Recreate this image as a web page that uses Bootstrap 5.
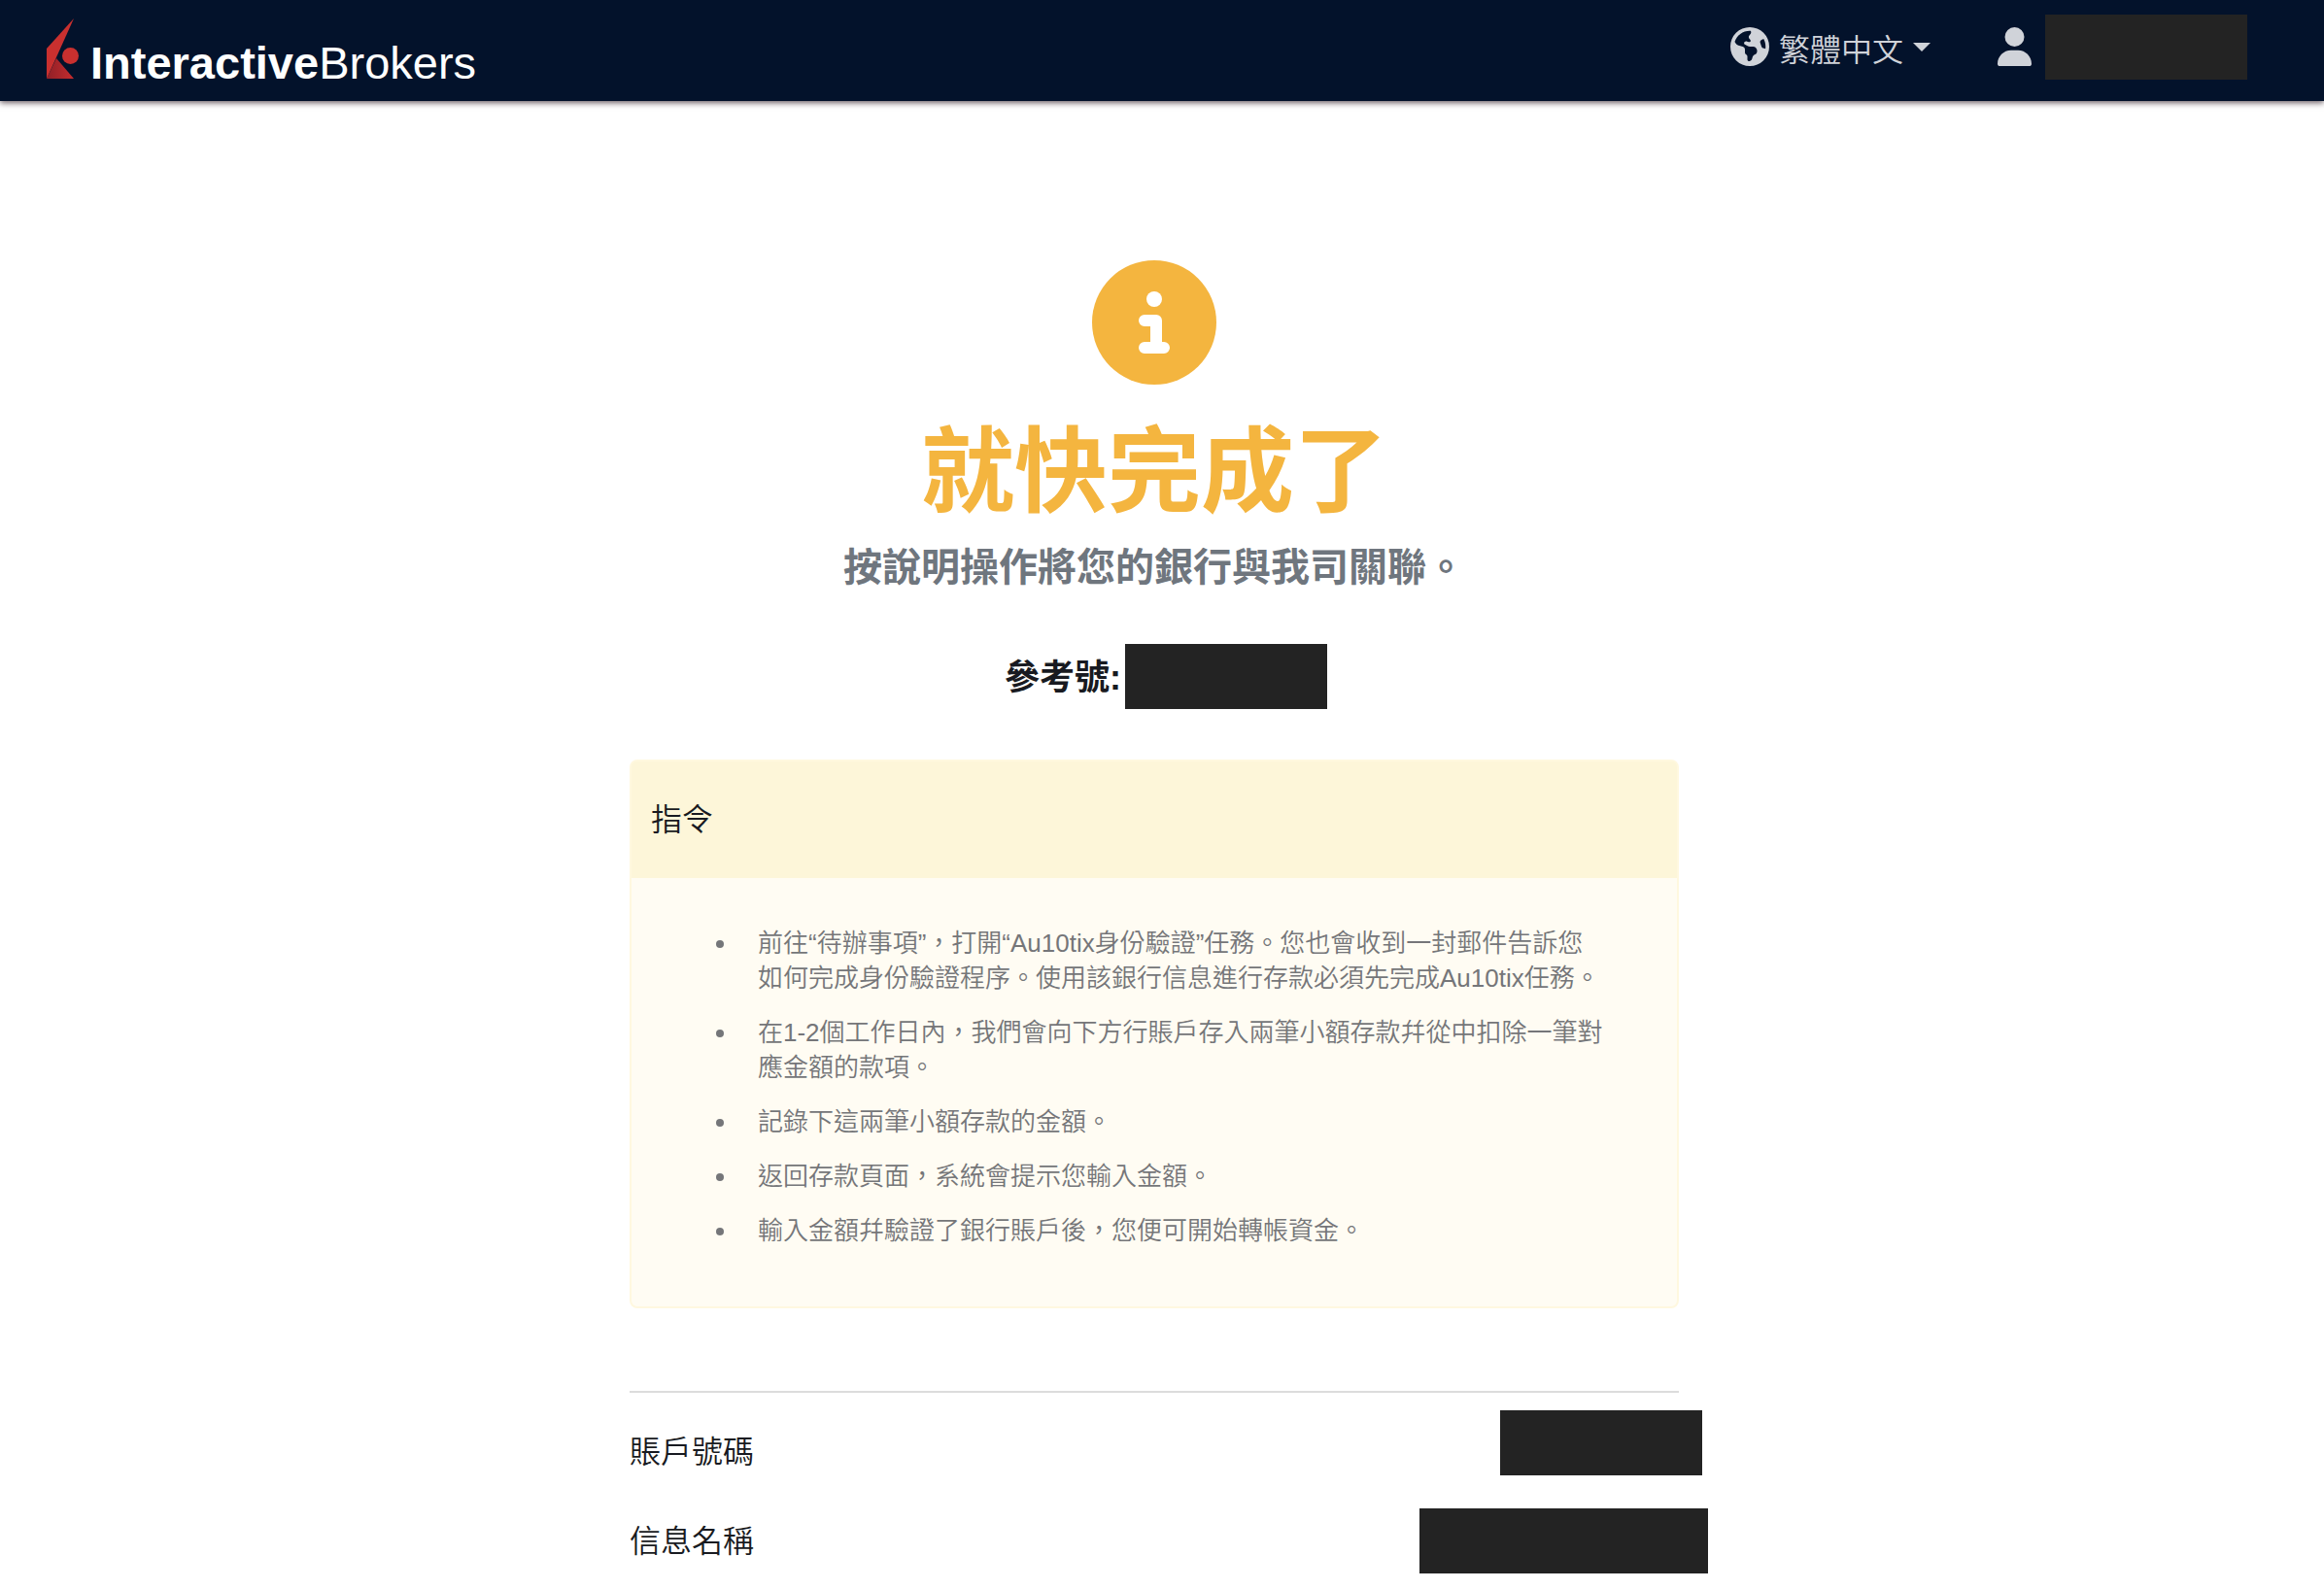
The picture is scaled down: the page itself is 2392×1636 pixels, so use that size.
<!DOCTYPE html>
<html lang="zh-Hant">
<head>
<meta charset="utf-8">
<meta name="viewport" content="width=device-width, initial-scale=1">
<title>InteractiveBrokers</title>
<link rel="stylesheet" href="https://cdn.jsdelivr.net/npm/bootstrap@5.3.0/dist/css/bootstrap.min.css">
<style>
  body { font-family: "Liberation Sans", "Noto Sans CJK TC", sans-serif; font-size: 32px; line-height: 48px; font-weight: 350; color: #181a21; background: #fff; }
  .top-bar { min-height: 104px; padding: 12px 79px 20px 48px; background: #03122b; box-shadow: 0 2px 6px rgba(30, 10, 20, .65); }
  .brand-link { gap: 12px; padding: 4px 0 0; margin: 0; }
  .brand-text { font: 47px/24px "Liberation Sans", sans-serif; color: #fff; }
  .bar-tools { gap: 69px; }
  .bar-item { color: #d0d3d9; font-size: 32px; line-height: 48px; font-weight: 350; text-decoration: none; gap: 10px; }
  .bar-item:hover, .bar-item:focus { color: #fff; }
  .caret-mark { width: 18px; height: 9px; }
  .redacted { display: block; flex: none; width: 208px; height: 67px; background: #232323; }
  .redacted-wide { width: 297px; }
  .spill { margin-right: -24px; }
  .spill-wide { margin-right: -30px; }
  .page-area { padding: 164px 16px 16px 0; }
  .content-column { max-width: 1080px; }
  .headline { font-size: 96px; line-height: 116px; font-weight: 700; color: #f4b53f; }
  .subline { font-size: 40px; line-height: 48px; font-weight: 700; color: #6f767e; margin-bottom: 55px; }
  .ref-line { font-size: 36px; line-height: 64px; font-weight: 700; gap: 4px; margin-bottom: 52px; }
  .notice { border: 2px solid #fff8df; border-radius: 8px; background: #fffcf3; --bs-card-color: #757679; }
  .notice-head { padding: 36px 20px; border: 0; background: #fdf6d9; color: #181a21; }
  .notice-head h2 { font-size: 32px; line-height: 48px; font-weight: 350; }
  .notice-body { padding: 49px 74px 40px 82px; font-size: 26px; line-height: 36px; }
  .notice-body ul { padding-left: 28px; }
  .notice-body li { margin-bottom: 20px; padding-left: 20px; }
  .rule { border-top: 2px solid #dcdcdc; opacity: 1; margin: 85px 0 18px; }
  .details-list { gap: 34px; }
  .details-list dt { font-weight: 350; }
</style>
<script src="https://cdn.jsdelivr.net/npm/bootstrap@5.3.0/dist/js/bootstrap.bundle.min.js"></script>
</head>
<body>
<header class="top-bar navbar d-flex align-items-center justify-content-between flex-nowrap position-relative">
  <a class="brand-link navbar-brand d-flex align-items-baseline" href="#">
    <svg width="33" height="62" viewBox="0 0 33 62" aria-hidden="true">
      <defs><linearGradient id="fold" x1="0" y1="0" x2="1" y2="0"><stop offset="0" stop-color="#8f2027"/><stop offset="1" stop-color="#c62c2e"/></linearGradient></defs>
      <path d="M10 41 28 62H0z" fill="url(#fold)"/>
      <path d="M28 0 0 31v31l10-22z" fill="#c9302f"/>
      <circle cx="24.500" cy="38.500" r="8.500" fill="#c9302f"/>
    </svg>
    <span class="brand-text"><strong>Interactive</strong>Brokers</span>
  </a>
  <div class="bar-tools d-flex align-items-center">
    <button class="bar-item btn border-0 p-0 d-flex align-items-center" type="button">
      <svg width="40" height="40" viewBox="0 0 512 512" fill="currentColor" aria-hidden="true"><path fill-rule="evenodd" d="M57.700 193l9.400 16.400c8.300 14.500 21.900 25.200 38 29.800L163 255.700c17.200 4.900 29 20.600 29 38.500v39.900c0 11 6.200 21 16 25.900s16 14.900 16 25.900v39c0 15.600 14.900 26.900 29.900 22.600c16.100-4.600 28.600-17.500 32.700-33.800l2.800-11.200c4.200-16.900 15.200-31.400 30.300-40l8.100-4.600c15-8.500 24.200-24.500 24.200-41.700v-8.300c0-12.700-5.100-24.900-14.100-33.900l-3.900-3.900c-9-9-21.200-14.100-33.900-14.100H257c-11.100 0-22.100-2.900-31.800-8.400l-34.500-19.700c-4.300-2.500-7.600-6.500-9.200-11.200c-3.200-9.600 1.100-20 10.200-24.500l5.900-3c6.600-3.300 14.300-3.900 21.300-1.500l23.200 7.700c8.200 2.700 17.200-.4 21.900-7.500c4.700-7 4.200-16.300-1.200-22.800l-13.600-16.300c-10-12-9.900-29.500 .3-41.300l15.700-18.300c8.800-10.300 10.200-25 3.500-36.700l-2.400-4.200c-3.500-.2-6.900-.3-10.400-.3C163.100 48 84.400 108.900 57.700 193zM464 256c0-36.800-9.600-71.400-26.400-101.500L412 164.800c-15.700 6.300-23.800 23.800-18.500 39.800l16.900 50.700c3.500 10.400 12 18.300 22.600 20.900l29.100 7.300c1.200-9 1.800-18.200 1.800-27.500zM0 256a256 256 0 1 1 512 0A256 256 0 1 1 0 256z"/></svg>
      <span class="pt-2">繁體中文</span>
      <svg class="caret-mark" viewBox="0 0 18 9" fill="currentColor" aria-hidden="true"><path d="M0 0h18L9 9z"/></svg>
    </button>
    <a class="bar-item d-flex align-items-center" href="#" aria-label="帳戶">
      <svg width="35" height="40" viewBox="0 0 448 512" fill="currentColor" aria-hidden="true"><path d="M224 256A128 128 0 1 0 224 0a128 128 0 1 0 0 256zm-45.700 48C79.800 304 0 383.800 0 482.300C0 498.700 13.300 512 29.700 512H418.300c16.400 0 29.700-13.300 29.700-29.700C448 383.800 368.200 304 269.700 304H178.300z"/></svg>
      <span class="redacted ms-1"></span>
    </a>
  </div>
</header>

<main class="page-area">
  <div class="content-column mx-auto">
    <section class="text-center">
      <svg class="d-block mx-auto" width="128" height="128" viewBox="0 0 128 128" aria-hidden="true">
        <circle cx="64" cy="64" r="64" fill="#f4b53f"/>
        <circle cx="64" cy="40" r="8" fill="#fff"/>
        <path fill="#fff" d="M54 56h12a6 6 0 0 1 6 6v22h2a6 6 0 0 1 0 12H54a6 6 0 0 1 0-12h6V68h-6a6 6 0 0 1 0-12z"/>
      </svg>
      <h1 class="headline mt-4 pt-2 mb-3">就快完成了</h1>
      <p class="subline">按說明操作將您的銀行與我司關聯。</p>
      <p class="ref-line d-flex justify-content-center align-items-end"><span>參考號:</span><span class="redacted spill"></span></p>
    </section>

    <section class="notice card">
      <div class="notice-head card-header"><h2 class="mb-0">指令</h2></div>
      <div class="notice-body card-body">
        <ul class="mb-0">
          <li>前往“待辦事項”，打開“Au10tix身份驗證”任務。您也會收到一封郵件告訴您如何完成身份驗證程序。使用該銀行信息進行存款必須先完成Au10tix任務。</li>
          <li>在1-2個工作日內，我們會向下方行賬戶存入兩筆小額存款幷從中扣除一筆對應金額的款項。</li>
          <li>記錄下這兩筆小額存款的金額。</li>
          <li>返回存款頁面，系統會提示您輸入金額。</li>
          <li>輸入金額幷驗證了銀行賬戶後，您便可開始轉帳資金。</li>
        </ul>
      </div>
    </section>

    <hr class="rule">
    <dl class="details-list d-flex flex-column mb-0">
      <div class="d-flex justify-content-between align-items-end"><dt>賬戶號碼</dt><dd class="redacted spill mb-0"></dd></div>
      <div class="d-flex justify-content-between align-items-center"><dt>信息名稱</dt><dd class="redacted redacted-wide spill-wide mb-0"></dd></div>
    </dl>
  </div>
</main>
</body>
</html>
